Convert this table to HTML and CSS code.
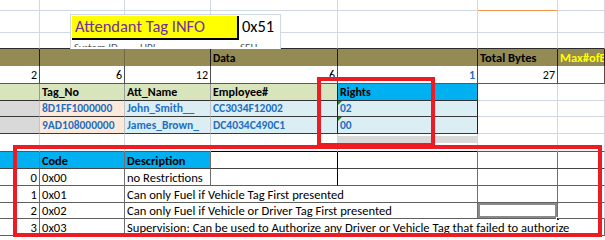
FILE: index.html
```html
<!DOCTYPE html>
<html>
<head>
<meta charset="utf-8">
<link rel="stylesheet" href="styles.css">
</head>
<body>
<div class="sheet">
  <div class="row top r1">
    <div class="c"></div><div class="c"></div><div class="c"></div><div class="c"></div><div class="c"></div><div class="c orange-top"></div><div class="c"></div>
  </div>
  <div class="row top r2">
    <div class="c"></div><div class="c"></div><div class="c"></div><div class="c"></div><div class="c"></div><div class="c"></div><div class="c"></div>
  </div>
  <div class="row top r3">
    <div class="c"></div><div class="c"></div><div class="c"></div><div class="c"></div><div class="c"></div><div class="c"></div><div class="c"></div>
  </div>

  <div class="row brown">
    <div class="c"></div><div class="c soft"></div><div class="c"></div><div class="c b">Data</div><div class="c"></div><div class="c b big">Total Bytes</div><div class="c b yel big">Max#ofBytes</div>
  </div>

  <div class="row nums">
    <div class="c r">2</div><div class="c r">6</div><div class="c r">12</div><div class="c r">6</div><div class="c r blue b">1</div><div class="c r">27</div><div class="c"></div>
  </div>

  <div class="row hdr-green">
    <div class="c g"></div><div class="c g b">Tag_No</div><div class="c g b">Att_Name</div><div class="c g b dk">Employee#</div><div class="c sky b dk">Rights</div><div class="c lt"></div><div class="c lt"></div>
  </div>

  <div class="row data h16">
    <div class="c grey"></div><div class="c peach blue b">8D1FF1000000</div><div class="c ice blue b">John_Smith__</div><div class="c ice blue b dk">CC3034F12002</div><div class="c ice blue b dk tri">02</div><div class="c lt"></div><div class="c lt"></div>
  </div>
  <div class="row data">
    <div class="c grey"></div><div class="c peach blue b">9AD108000000</div><div class="c ice blue b">James_Brown_</div><div class="c ice blue b dk">DC4034C490C1</div><div class="c ice blue b dk tri">00</div><div class="c lt"></div><div class="c lt"></div>
  </div>

  <div class="row blank">
    <div class="c"></div><div class="c"></div><div class="c"></div><div class="c blk"></div><div class="c blk bar-cell"><div class="bar"></div></div><div class="c"></div><div class="c"></div>
  </div>

  <div class="row codes hdr-blue">
    <div class="c sky"></div><div class="c sky b">Code</div><div class="c sky b">Description</div><div class="c blkr"></div><div class="c"></div><div class="c"></div><div class="c nor"></div>
  </div>
  <div class="row codes">
    <div class="c r">0</div><div class="c">0x00</div><div class="c">no Restrictions</div><div class="c blkr"></div><div class="c"></div><div class="c"></div><div class="c nor"></div>
  </div>
  <div class="row codes">
    <div class="c r">1</div><div class="c">0x01</div><div class="c span3">Can only Fuel if Vehicle Tag First presented</div><div class="c"></div><div class="c nor"></div>
  </div>
  <div class="row codes h16">
    <div class="c r">2</div><div class="c">0x02</div><div class="c span3">Can only Fuel if Vehicle or Driver Tag First presented</div><div class="c sel"><span class="handle"></span></div><div class="c nor"></div>
  </div>
  <div class="row codes">
    <div class="c r">3</div><div class="c">0x03</div><div class="c span5">Supervision: Can be used to Authorize any Driver or Vehicle Tag that failed to authorize</div>
  </div>

  <div class="title-box">
    <div class="title-line">
      <div class="title">Attendant Tag INFO</div>
      <div class="hexval">0x51</div>
    </div>
    <div class="peek"><span class="p1">System ID</span><span class="p2">UPI</span><span class="p3">SEH</span></div>
  </div>

  <div class="redbox rights-box"></div>
  <div class="redbox codes-box"></div>
</div>
</body>
</html>
```

FILE: styles.css
```css
* { box-sizing: border-box; margin: 0; padding: 0; }
body {
  margin: 0;
  background: #fff;
  font-family: Carlito, Lato, "Liberation Sans", sans-serif;
  font-size: 11.5px;
  color: #000;
}
.sheet {
  position: relative;
  width: 605px;
  height: 240px;
  overflow: hidden;
}
.row {
  display: grid;
  grid-template-columns: 40px 85px 86px 127px 140px 80px 47px;
  height: 17px;
}
.c {
  border-right: 1px solid #d0d7e5;
  border-bottom: 1px solid #d0d7e5;
  padding: 0 2px 1px 2px;
  white-space: nowrap;
  overflow: hidden;
  display: flex;
  align-items: flex-end;
  line-height: 14px;
  position: relative;
}
.r { justify-content: flex-end; }
.b { font-weight: bold; }
.big { font-size: 12.5px; }
.blue { color: #1f6fc5; }
.yel { color: #ffff00; }

/* top area */
.r1 { height: 11px; }
.r2 { height: 22px; }
.r3 { height: 16px; }
.r3 .c { border-bottom-color: #2a2a2a; }
.orange-top { border-bottom-color: #f79646; }

/* brown header */
.brown { height: 17px; background: #948a54; }
.brown .c { border-right-color: #1e1e1e; border-bottom: none; }
.brown .c.soft { border-right-color: #6f6844; }

/* numbers row */
.nums { height: 18px; }
.nums .c { border-right-color: #4d4d4d; border-bottom-color: #5a5a5a; font-size: 12px; }

/* green header */
.hdr-green .c { border-bottom-color: #333; border-right-color: #9a9a9a; font-size: 12px; }
.hdr-green .c.dk { border-right-color: #222; }
.g { background: #d8e4bc; }
.sky { background: #00b0f0; }
.c.lt { border-right-color: #d0d7e5; border-bottom-color: #d0d7e5; }

/* data rows */
.h16 { height: 16px; }
.data .c { border-bottom-color: #3a3a3a; border-right-color: #c4c4c4; }
.data .c.dk { border-right-color: #222; }
.data .c.lt { border-right-color: #d0d7e5; border-bottom-color: #d0d7e5; }
.grey { background: #d9d9d9; }
.peach { background: #fde9d9; }
.ice { background: #daeef3; }
.tri::before {
  content: "";
  position: absolute;
  left: 0;
  top: 0;
  border-top: 4px solid #1a8a1a;
  border-right: 4px solid transparent;
}

/* blank row */
.blank { height: 18px; }
.blank .c { border-bottom-color: #555; }
.blank .c.blk { border-bottom-color: #000; }
.bar-cell { padding: 0; align-items: flex-start; border-right-color: #d0d7e5; }
.bar { width: 100%; height: 7px; margin-top: 2px; background: #d9d9d9; }

/* codes table */
.codes .c { border-bottom-color: #5f5f5f; border-right-color: #6f6f6f; font-size: 12.6px; line-height: 15px; padding-bottom: 0; }
.codes .c.blkr { border-right-color: #000; }
.codes .c.nor { border-right-color: #d0d7e5; }
.hdr-blue .c { border-bottom-color: #444; }
.hdr-blue .c.b { font-size: 12.3px; }
.span3 { grid-column: 3 / 6; }
.span5 { grid-column: 3 / 8; }
.codes .c.sel { box-shadow: inset 0 0 0 2px #8a8a8a; overflow: visible; }
.handle {
  position: absolute;
  right: -3px;
  bottom: -3px;
  width: 4px;
  height: 4px;
  background: #222;
  border: 1px solid #fff;
}

/* title overlay */
.title-box {
  position: absolute;
  left: 70px;
  top: 14px;
  width: 211px;
  height: 35px;
  background: #fff;
  border: 1px solid #d0d7e5;
  border-bottom: none;
  padding: 1px 0 0 1px;
}
.title-line { display: flex; height: 24px; }
.title {
  width: 167px;
  background: #ffff00;
  border-right: 2px solid #000;
  border-bottom: 2px solid #000;
  color: #7030a0;
  font-size: 16.5px;
  line-height: 21px;
  padding-left: 3px;
  white-space: nowrap;
}
.hexval {
  font-size: 16.5px;
  line-height: 21px;
  padding-left: 3px;
  color: #000;
}
.peek {
  height: 6px;
  overflow: hidden;
  display: flex;
  color: #555;
  font-size: 11px;
  line-height: 14px;
  margin-top: 1px;
}
.p1 { width: 68px; padding-left: 2px; }
.p2 { width: 98px; }
.p3 { padding-left: 2px; }

/* red highlight boxes */
.redbox {
  position: absolute;
  border: 4px solid #ed1c24;
}
.rights-box { left: 317px; top: 77px; width: 118px; height: 70px; }
.codes-box { left: 13px; top: 145px; width: 589px; height: 92px; }
```
